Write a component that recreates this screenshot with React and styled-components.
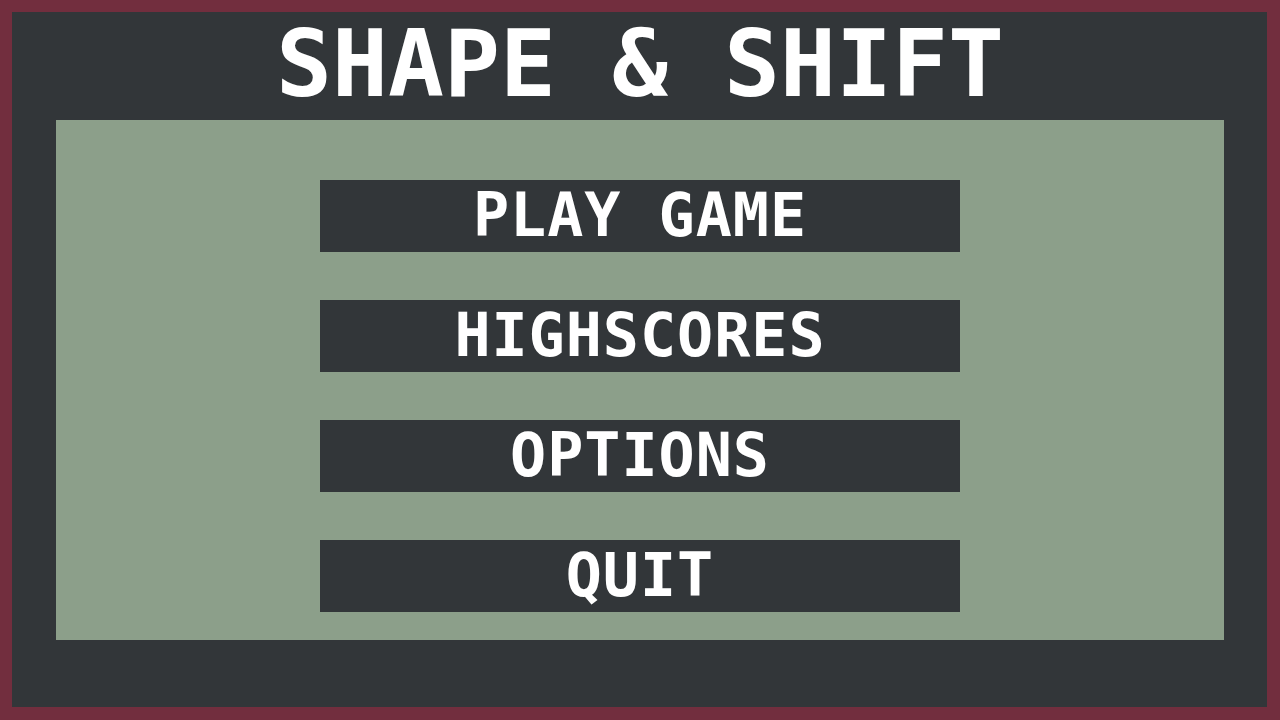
import React from 'react';
import styled, { createGlobalStyle } from 'styled-components';

const GlobalStyle = createGlobalStyle`
    * { box-sizing: border-box; }
    html, body { margin: 0; padding: 0; background: #722e3e; }
    #root { width: 1280px; height: 720px; }
`;

const Screen = styled.div`
    width: 1280px;
    height: 720px;
    border: 12px solid #722e3e;
    border-right-width: 13px;
    border-bottom-width: 13px;
    background-color: #323639;
    display: flex;
    flex-direction: column;
    font-family: "DejaVu Sans Mono", "Liberation Mono", monospace;
    font-weight: bold;
    color: #ffffff;
`;

const Title = styled.h1`
    margin: 0 0 0 1px;
    height: 108px;
    display: flex;
    align-items: center;
    justify-content: center;
    font-size: 93px;
    font-weight: bold;
    padding-bottom: 4px;
`;

const Panel = styled.div`
    width: 1168px;
    height: 520px;
    margin-left: 44px;
    background-color: #8c9f8a;
    display: flex;
    flex-direction: column;
    align-items: center;
    padding-top: 60px;
    gap: 48px;
`;

const MenuButton = styled.button`
    width: 640px;
    height: 72px;
    border: none;
    padding: 0 0 3px;
    background-color: #323639;
    color: #ffffff;
    font-family: inherit;
    font-weight: bold;
    font-size: 60px;
    letter-spacing: 1px;
    line-height: 1;
    cursor: pointer;
`;

const items = ['PLAY GAME', 'HIGHSCORES', 'OPTIONS', 'QUIT'];

const App = () => {
    return (
        <>
            <GlobalStyle />
            <Screen>
                <Title>SHAPE &amp; SHIFT</Title>
                <Panel>
                    {items.map((label) => (
                        <MenuButton key={label}>{label}</MenuButton>
                    ))}
                </Panel>
            </Screen>
        </>
    );
};

export default App;
